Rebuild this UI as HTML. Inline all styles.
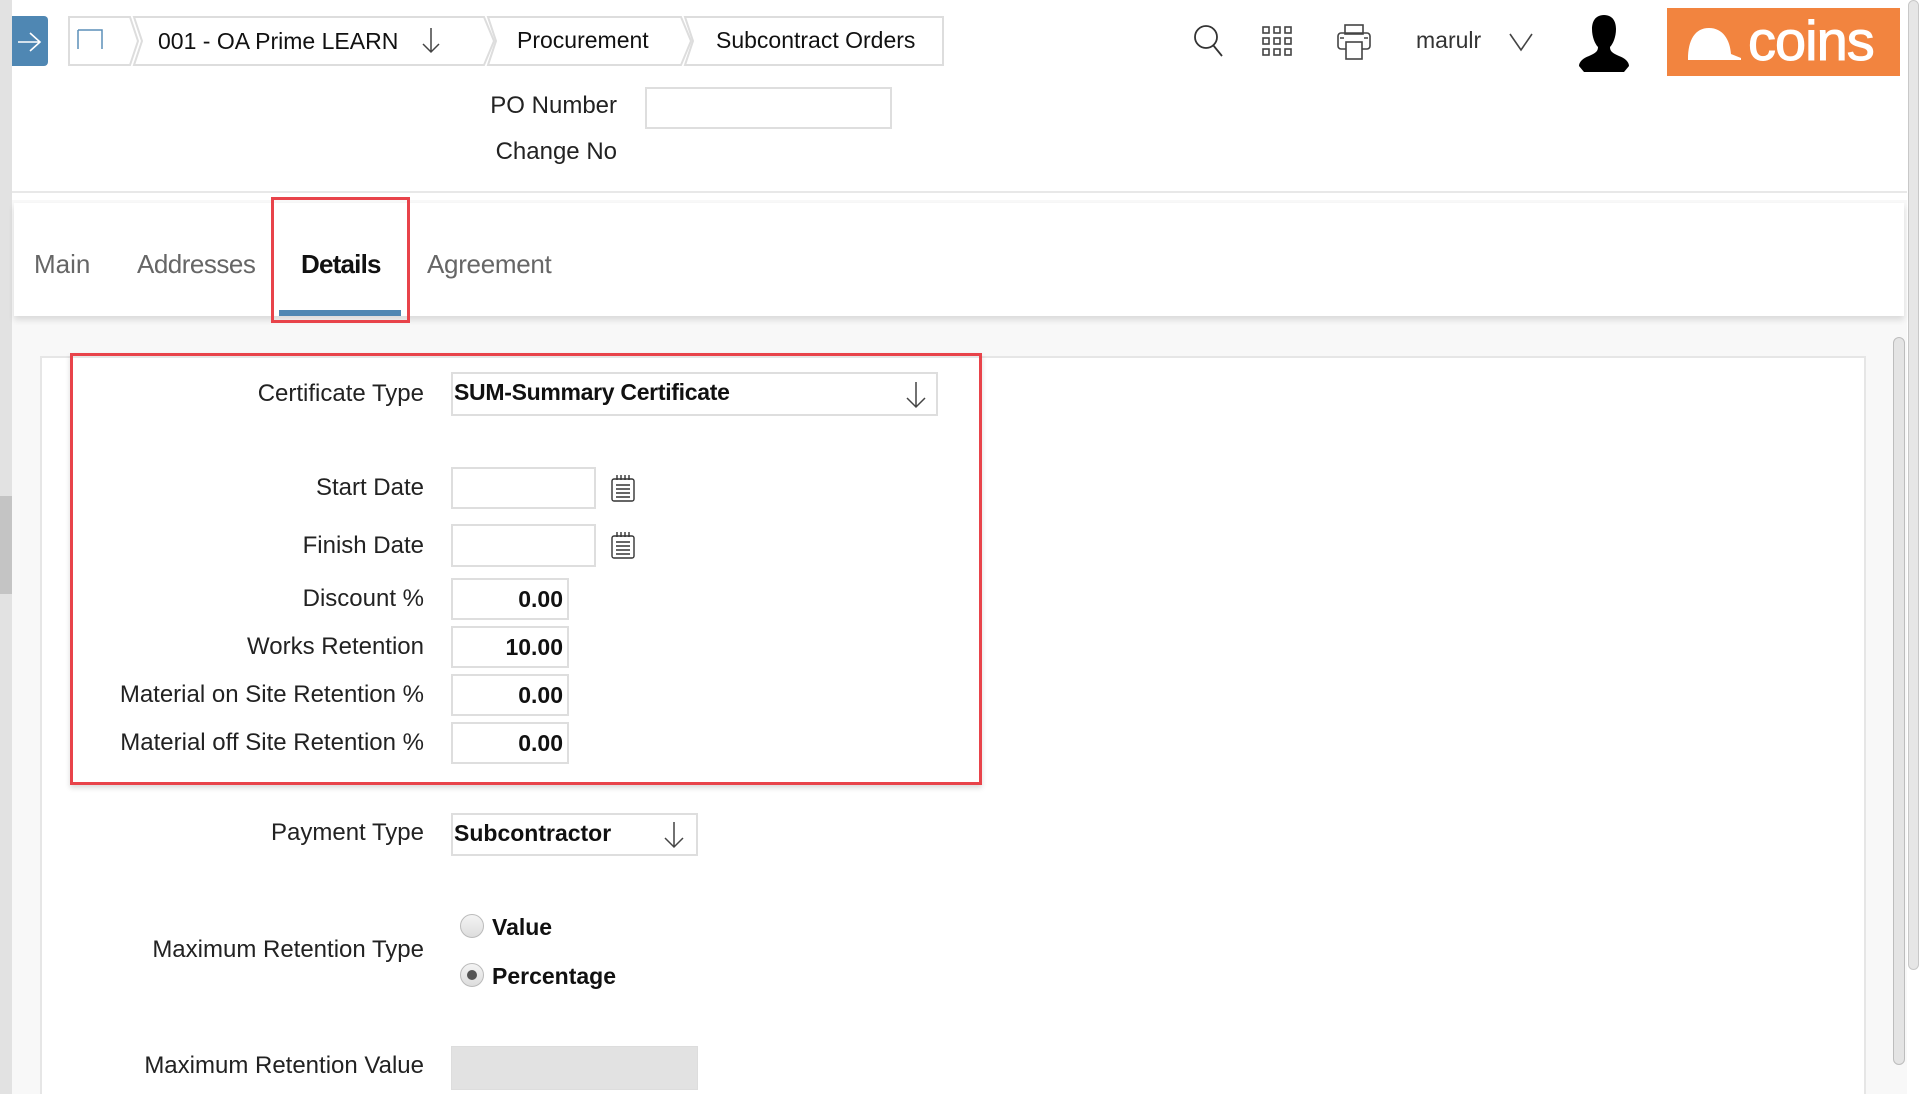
<!DOCTYPE html>
<html><head><meta charset="utf-8"><style>
*{margin:0;padding:0;box-sizing:border-box}
body{width:1920px;height:1094px;overflow:hidden;background:#fff;font-family:"Liberation Sans",sans-serif;color:#222;position:relative}
.a{position:absolute}
.lbl{position:absolute;right:1496px;font-size:24px;color:#222;white-space:nowrap;margin-top:1px}
.inp{position:absolute;border:2px solid #dedede;background:#fff}
.num{font-size:23px;font-weight:bold;text-align:right;padding-right:4px;line-height:38px;color:#111}
</style></head><body>
<div class="a" style="left:0;top:0;width:12px;height:1094px;background:#e2e2e2"></div>
<div class="a" style="left:0;top:496px;width:12px;height:98px;background:#c4c4c4"></div>
<div class="a" style="left:12px;top:16px;width:36px;height:50px;background:#4f87b3;border-radius:0 4px 4px 0"></div>
<svg class="a" style="left:16px;top:30px" width="28" height="24"><path d="M2 12H24M14 3L24 12L14 21" stroke="#fff" stroke-width="1.6" fill="none"/></svg>
<svg class="a" style="left:66px;top:14px" width="880" height="54">
<g fill="#fff" stroke="#ddd" stroke-width="2">
<path d="M3 3H64L72 27L64 51H3Z"/>
<path d="M68 3H418L428 27L418 51H68L76 27Z"/>
<path d="M422 3H615L625 27L615 51H422L430 27Z"/>
<path d="M619 3H877V51H619L627 27Z"/>
</g>
<path d="M12 16V35M12 16H36V35" stroke="#5b8fb8" stroke-width="1.5" fill="none"/>
<path d="M365 14V38M357 30L365 38L373 30" stroke="#444" stroke-width="1.5" fill="none"/>
</svg>
<div class="a" style="left:158px;top:28px;font-size:23px;color:#111">001 - OA Prime LEARN</div>
<div class="a" style="left:517px;top:27px;font-size:23px;color:#111">Procurement</div>
<div class="a" style="left:716px;top:27px;font-size:23px;color:#111">Subcontract Orders</div>
<svg class="a" style="left:1192px;top:22px" width="34" height="36"><circle cx="14" cy="15" r="11" stroke="#333" stroke-width="1.8" fill="none"/><path d="M21 23L30 34" stroke="#333" stroke-width="1.8"/></svg>
<svg class="a" style="left:1262px;top:26px" width="32" height="32"><g fill="none" stroke="#444" stroke-width="1.6"><rect x="1" y="1" width="6" height="6"/><rect x="12" y="1" width="6" height="6"/><rect x="23" y="1" width="6" height="6"/><rect x="1" y="12" width="6" height="6"/><rect x="12" y="12" width="6" height="6"/><rect x="23" y="12" width="6" height="6"/><rect x="1" y="23" width="6" height="6"/><rect x="12" y="23" width="6" height="6"/><rect x="23" y="23" width="6" height="6"/></g></svg>
<svg class="a" style="left:1336px;top:23px" width="36" height="38"><g fill="none" stroke="#444" stroke-width="1.6"><rect x="9" y="2" width="18" height="9"/><rect x="2" y="10" width="32" height="16" rx="3"/><rect x="10" y="19" width="16" height="17" fill="#fff"/><path d="M4 15H8M28 15H32"/></g></svg>
<div class="a" style="left:1416px;top:27px;font-size:23px;color:#333">marulr</div>
<svg class="a" style="left:1508px;top:32px" width="26" height="20"><path d="M2 2L13 18L24 2" stroke="#444" stroke-width="1.6" fill="none"/></svg>
<svg class="a" style="left:1577px;top:14px" width="54" height="60"><path d="M27 1C18 1 15 8 15 15C15 23 18 30 21 33C21 37 19 39 12 42C6 44 2 48 2 52L7 58H47L52 52C52 48 48 44 42 42C35 39 33 37 33 33C36 30 39 23 39 15C39 8 36 1 27 1Z" fill="#000"/></svg>
<div class="a" style="left:1667px;top:8px;width:233px;height:68px;background:#f2843f"></div>
<svg class="a" style="left:1685px;top:22px" width="60" height="40"><path d="M3 37C3 18 10 6 24 6C38 6 45 18 46 32L56 36V38H3Z" fill="#fff"/></svg>
<div class="a" style="left:1748px;top:6px;font-size:56px;color:#fff;letter-spacing:-1px;line-height:70px;-webkit-text-stroke:1px #fff">coins</div>
<div class="a" style="left:1908px;top:0;width:11px;height:970px;background:#e6e6e6;border:1px solid #c8c8c8;border-radius:6px"></div>
<div class="a" style="left:470px;top:92px;width:147px;text-align:right;font-size:24px;color:#222">PO Number</div>
<div class="inp" style="left:645px;top:87px;width:247px;height:42px"></div>
<div class="a" style="left:470px;top:138px;width:147px;text-align:right;font-size:24px;color:#222">Change No</div>
<div class="a" style="left:12px;top:191px;width:1895px;height:2px;background:#e8e8e8"></div>
<div class="a" style="left:12px;top:200px;width:1895px;height:894px;background:#f8f8f8"></div>
<div class="a" style="left:14px;top:203px;width:1890px;height:113px;background:#fff;box-shadow:0 4px 6px rgba(0,0,0,0.12)"></div>
<div class="a" style="left:34px;top:249px;font-size:26px;color:#666">Main</div>
<div class="a" style="left:137px;top:249px;font-size:26px;color:#666;letter-spacing:-0.5px">Addresses</div>
<div class="a" style="left:301px;top:249px;font-size:26px;font-weight:bold;color:#111;letter-spacing:-0.8px">Details</div>
<div class="a" style="left:427px;top:249px;font-size:26px;color:#666;letter-spacing:-0.3px">Agreement</div>
<div class="a" style="left:279px;top:310px;width:122px;height:6px;background:#4f87b3"></div>
<div class="a" style="left:271px;top:197px;width:139px;height:126px;border:3px solid #e8434a"></div>
<div class="a" style="left:40px;top:356px;width:1826px;height:738px;background:#fff;border:2px solid #e6e6e6;border-bottom:none"></div>
<div class="a" style="left:1893px;top:337px;width:12px;height:728px;background:#e4e4e4;border:1px solid #bdbdbd;border-radius:6px"></div>
<div class="a" style="left:70px;top:353px;width:912px;height:432px;border:3px solid #e8434a;box-shadow:0 3px 5px rgba(0,0,0,0.15)"></div>
<div class="lbl" style="top:379px">Certificate Type</div>
<div class="inp" style="left:451px;top:372px;width:487px;height:44px"></div>
<div class="a" style="left:454px;top:379px;font-size:23px;font-weight:bold;color:#111;letter-spacing:-0.3px">SUM-Summary Certificate</div>
<svg class="a" style="left:904px;top:380px" width="24" height="30"><path d="M12 2V27M3 18L12 27L21 18" stroke="#444" stroke-width="1.5" fill="none"/></svg>
<div class="lbl" style="top:473px">Start Date</div>
<div class="inp" style="left:451px;top:467px;width:145px;height:42px"></div>
<svg class="a" style="left:610px;top:473px" width="26" height="30"><g fill="none" stroke="#333" stroke-width="1.4"><rect x="2" y="6" width="22" height="22" rx="2"/><path d="M7 2V7M11 2V7M15 2V7M19 2V7M6 12H20M6 16H20M6 20H20M6 24H20"/></g></svg>
<div class="lbl" style="top:531px">Finish Date</div>
<div class="inp" style="left:451px;top:524px;width:145px;height:43px"></div>
<svg class="a" style="left:610px;top:530px" width="26" height="30"><g fill="none" stroke="#333" stroke-width="1.4"><rect x="2" y="6" width="22" height="22" rx="2"/><path d="M7 2V7M11 2V7M15 2V7M19 2V7M6 12H20M6 16H20M6 20H20M6 24H20"/></g></svg>
<div class="lbl" style="top:584px">Discount %</div>
<div class="inp num" style="left:451px;top:578px;width:118px;height:42px">0.00</div>
<div class="lbl" style="top:632px">Works Retention</div>
<div class="inp num" style="left:451px;top:626px;width:118px;height:42px">10.00</div>
<div class="lbl" style="top:680px">Material on Site Retention %</div>
<div class="inp num" style="left:451px;top:674px;width:118px;height:42px">0.00</div>
<div class="lbl" style="top:728px">Material off Site Retention %</div>
<div class="inp num" style="left:451px;top:722px;width:118px;height:42px">0.00</div>
<div class="lbl" style="top:818px">Payment Type</div>
<div class="inp" style="left:451px;top:813px;width:247px;height:43px"></div>
<div class="a" style="left:454px;top:820px;font-size:23px;font-weight:bold;color:#111">Subcontractor</div>
<svg class="a" style="left:662px;top:820px" width="24" height="30"><path d="M12 2V27M3 18L12 27L21 18" stroke="#444" stroke-width="1.5" fill="none"/></svg>
<div class="lbl" style="top:935px">Maximum Retention Type</div>
<div class="a" style="left:460px;top:914px;width:24px;height:24px;border-radius:50%;border:1.5px solid #bbb;background:linear-gradient(#f4f4f4,#ddd)"></div>
<div class="a" style="left:492px;top:914px;font-size:23px;font-weight:bold;color:#111">Value</div>
<div class="a" style="left:460px;top:963px;width:24px;height:24px;border-radius:50%;border:1.5px solid #bbb;background:linear-gradient(#f4f4f4,#ddd)"></div>
<div class="a" style="left:467px;top:970px;width:10px;height:10px;border-radius:50%;background:#555"></div>
<div class="a" style="left:492px;top:963px;font-size:23px;font-weight:bold;color:#111">Percentage</div>
<div class="lbl" style="top:1051px">Maximum Retention Value</div>
<div class="a" style="left:451px;top:1046px;width:247px;height:44px;background:#e2e2e2;border:1px solid #ddd"></div>
</body></html>
